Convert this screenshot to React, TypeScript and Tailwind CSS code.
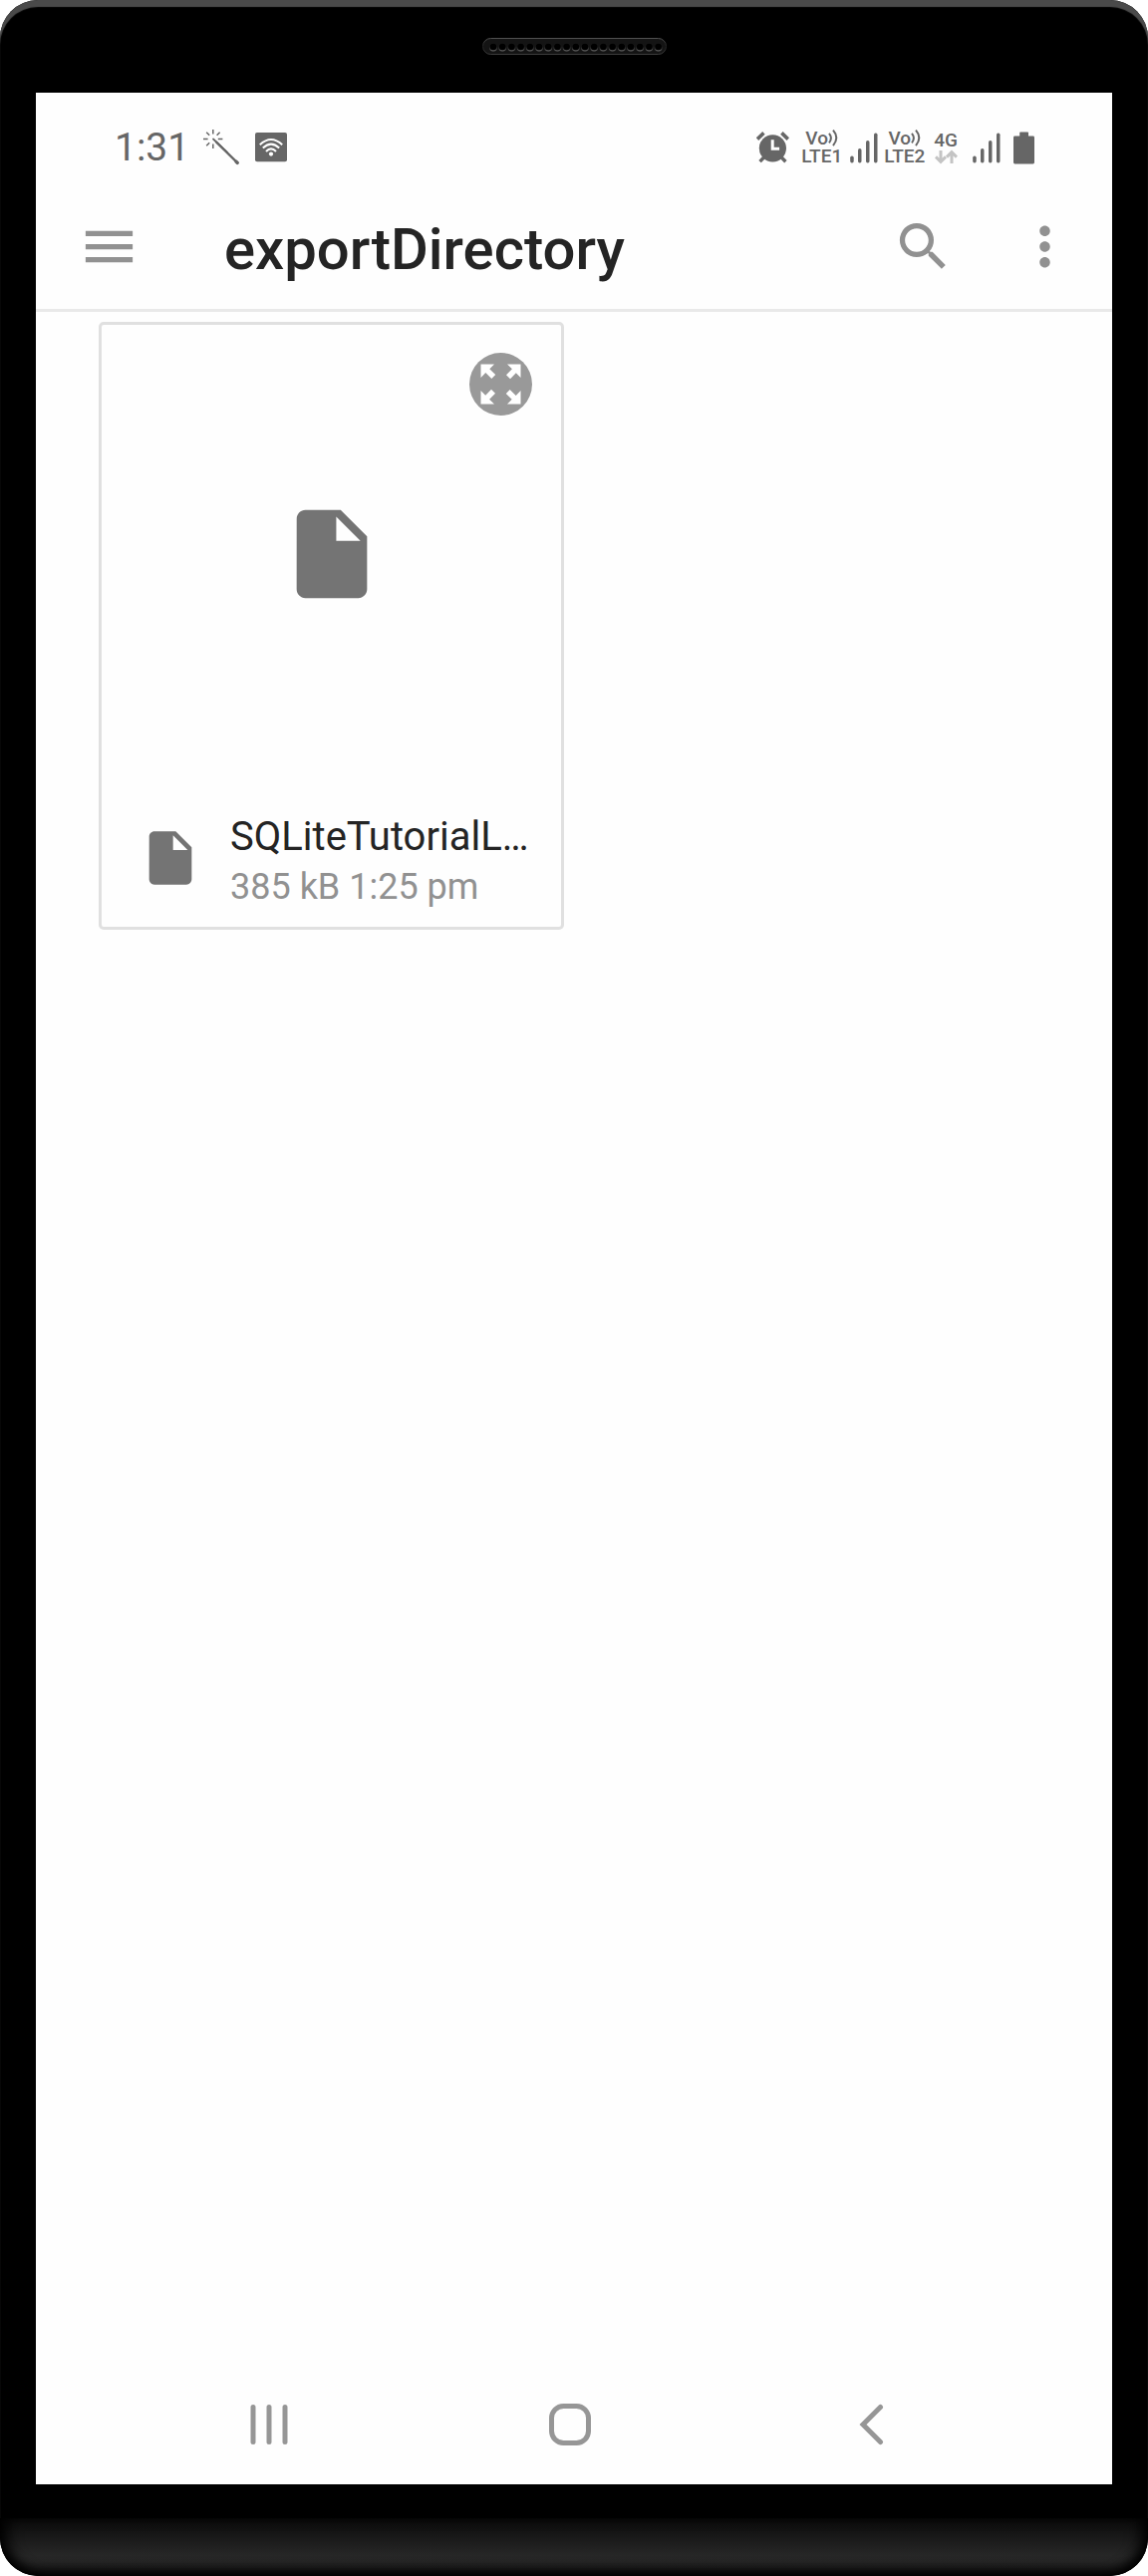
const LABEL = "font-medium whitespace-nowrap";

function Speaker() {
  const holes = Array.from({ length: 19 }, (_, i) => 11 + i * 9.2);
  return (
    <svg width="185" height="17" viewBox="0 0 185 17" aria-hidden="true">
      <defs>
        <linearGradient id="rim" x1="0" y1="0" x2="0" y2="1">
          <stop offset="0" stopColor="#505050" />
          <stop offset="0.5" stopColor="#222" />
          <stop offset="1" stopColor="#3c3c3c" />
        </linearGradient>
        <linearGradient id="hole" x1="0" y1="0" x2="0" y2="1">
          <stop offset="0.4" stopColor="#1a1a1a" />
          <stop offset="1" stopColor="#666" />
        </linearGradient>
      </defs>
      <rect x="0.5" y="0.5" width="184" height="16" rx="8" fill="#141414" stroke="url(#rim)" />
      {holes.map((x) => (
        <g key={x}>
          <circle cx={x} cy="9.5" r="4" fill="url(#hole)" />
          <circle cx={x} cy="9" r="3.3" fill="#000" />
        </g>
      ))}
    </svg>
  );
}

function WandIcon() {
  return (
    <svg width="36" height="36" viewBox="0 0 36 36" fill="none" stroke="currentColor" strokeLinecap="butt" aria-hidden="true">
      <path d="M9.8 0v4.4M9.8 14.6V19M0 9.5h4.6M14.8 9.5h4.6M3.2 2.8l3 3M16.6 2.8l-3 3M3.2 16.2l3-3" strokeWidth="1.5" />
      <path d="M10 9.5l14 13.3" strokeWidth="1.8" strokeLinecap="round" />
      <path d="M13 12.5L34 33.2" strokeWidth="2.4" strokeLinecap="round" />
      <path d="M33.2 32.4l1 1" strokeWidth="3.4" strokeLinecap="round" />
    </svg>
  );
}

function WifiBadge() {
  return (
    <svg width="32" height="30" viewBox="0 0 32 30" fill="none" aria-hidden="true">
      <rect width="32" height="29.3" rx="2" fill="currentColor" />
      <g stroke="#fff" strokeWidth="2.1">
        <path d="M4.8 12.2Q16 1.8 27.2 12.2" />
        <path d="M7.8 15.6Q16 7.6 24.2 15.6" />
        <path d="M11 18.9Q16 13.8 21 18.9" />
      </g>
      <circle cx="16" cy="21.6" r="2.1" fill="#fff" />
    </svg>
  );
}

function AlarmIcon() {
  return (
    <svg width="33" height="32" viewBox="0 0 33 32" fill="none" aria-hidden="true">
      <circle cx="16.4" cy="16.8" r="13.6" fill="currentColor" />
      <path d="M1 7.6L7.4 1.4M25.4 1.4l6.4 6.2" stroke="currentColor" strokeWidth="3.6" />
      <path d="M8 25.5l-4.4 4.7M24.8 25.5l4.6 4.7" stroke="currentColor" strokeWidth="3.4" />
      <path d="M16.2 8.3v8.9h6.9" stroke="#fff" strokeWidth="3" />
    </svg>
  );
}

function SignalIcon() {
  return (
    <svg width="28" height="31" viewBox="0 0 28 31" fill="currentColor" aria-hidden="true">
      <rect x="0.2" y="23.5" width="3.5" height="7" rx="1.7" />
      <rect x="8" y="16" width="3.5" height="14.5" rx="1.7" />
      <rect x="16" y="8" width="3.5" height="22.5" rx="1.7" />
      <rect x="24" y="0.5" width="3.5" height="30" rx="1.7" />
    </svg>
  );
}

function VoLte({ line }: { line: string }) {
  return (
    <span className="flex flex-col items-center text-[19px] leading-[18px]">
      <span className="flex items-start">
        <span className={LABEL}>Vo</span>
        <svg width="10" height="17" viewBox="0 0 10 17" fill="none" stroke="currentColor" strokeWidth="2" aria-hidden="true">
          <path d="M1 3.8q3.8 4.8 0 9.6M5 0.6q6.6 7.6 0 15.6" />
        </svg>
      </span>
      <span className={LABEL}>{line}</span>
    </span>
  );
}

function StatusBar() {
  return (
    <div className="flex h-[106px] items-center justify-between pt-1 pr-[78px] pl-[79px] text-[#666]">
      <div className="flex items-center">
        <span className="text-[39px] leading-none">1:31</span>
        <span className="ml-[14px]"><WandIcon /></span>
        <span className="ml-4"><WifiBadge /></span>
      </div>
      <div className="flex items-center">
        <AlarmIcon />
        <span className="ml-3"><VoLte line="LTE1" /></span>
        <span className="ml-2"><SignalIcon /></span>
        <span className="ml-[6px]"><VoLte line="LTE2" /></span>
        <span className="ml-[9px] flex flex-col items-center text-[19px] leading-[18px]">
          <span className={LABEL}>4G</span>
          <svg width="23" height="15" viewBox="0 0 23 15" fill="none" stroke="#c4c4c4" strokeWidth="3" aria-hidden="true">
            <path d="M6 1v11M1 7.4l5 5 5-5M17 14V3M12 7.6l5-5 5 5" />
          </svg>
        </span>
        <span className="ml-[15px]"><SignalIcon /></span>
        <svg className="ml-[13px]" width="21" height="33" viewBox="0 0 21 33" fill="currentColor" aria-hidden="true">
          <path d="M7 .4h7.2q.8 0 .8.8v3.4h4.6q1.4 0 1.4 1.4v25q0 1.4-1.4 1.4H1.4Q0 32.400 0 31V6q0-1.400 1.400-1.400h4.800V1.200Q6.200.4 7 .4z" />
        </svg>
      </div>
    </div>
  );
}

function Toolbar() {
  return (
    <header className="flex h-[114px] items-center border-b-3 border-[#e9e9e9] pr-9 pb-[14px] pl-[42px] text-[#919191]">
      <button type="button" aria-label="Open menu">
        <svg width="63" height="63" viewBox="0 0 24 24" fill="currentColor" aria-hidden="true">
          <path d="M3 18h18v-2H3v2zm0-5h18v-2H3v2zm0-7v2h18V6H3z" />
        </svg>
      </button>
      <h1 className="ml-[84px] flex-1 pt-1 text-[58px] leading-[66px] font-medium text-[#242424]">exportDirectory</h1>
      <button type="button" aria-label="Search">
        <svg width="63" height="63" viewBox="0 0 24 24" fill="currentColor" aria-hidden="true">
          <path d="M15.500 14h-.79l-.28-.27A6.471 6.471 0 0 0 16 9.500 6.500 6.500 0 1 0 9.500 16c1.610 0 3.090-.59 4.230-1.570l.27.28v.79l5 4.990L20.490 19l-4.990-5zm-6 0C7.010 14 5 11.990 5 9.500S7.010 5 9.500 5 14 7.010 14 9.500 11.990 14 9.500 14z" />
        </svg>
      </button>
      <button type="button" aria-label="More options" className="ml-[59px]">
        <svg width="63" height="63" viewBox="0 0 24 24" fill="currentColor" aria-hidden="true">
          <path d="M12 8c1.100 0 2-.9 2-2s-.9-2-2-2-2 .9-2 2 .9 2 2 2zm0 2c-1.100 0-2 .9-2 2s.9 2 2 2 2-.9 2-2-.9-2-2-2zm0 6c-1.100 0-2 .9-2 2s.9 2 2 2 2-.9 2-2-.9-2-2-2z" />
        </svg>
      </button>
    </header>
  );
}

function FileIcon({ size }: { size: number }) {
  return (
    <svg className="shrink-0" width={size} height={size} viewBox="0 0 24 24" fill="#747474" aria-hidden="true">
      <path d="M6 2c-1.100 0-1.990.9-1.990 2L4 20c0 1.100.89 2 1.990 2H18c1.100 0 2-.9 2-2V8l-6-6H6zm7 7V3.500L18.500 9H13z" />
    </svg>
  );
}

function FileCard({ name, details }: { name: string; details: string }) {
  return (
    <article className="relative rounded-[5px] border-3 border-[#e0e0e0]">
      <div className="flex h-[460px] items-center justify-center">
        <FileIcon size={106} />
      </div>
      <button type="button" aria-label={`Preview ${name}`} className="absolute top-7 right-[29px]">
        <svg width="63" height="63" viewBox="0 0 63 63" aria-hidden="true">
          <circle cx="31.500" cy="31.500" r="31.500" fill="#999" />
          <g fill="#fff">
            {[0, 90, 180, 270].map((turn) => (
              <path key={turn} transform={`rotate(${turn} 31.500 31.500)`} d="M11.500 11.500H25L20.300 16.200L26.200 22L22.300 26L16.300 20.100L11.500 25z" />
            ))}
          </g>
        </svg>
      </button>
      <div className="flex h-[144px] items-center pt-[6px] pl-[37px]">
        <FileIcon size={64} />
        <div className="ml-7 pt-2">
          <p className="text-[40px] leading-[50px] whitespace-nowrap text-[#242424]">{name}</p>
          <p className="text-[36px] leading-[50px] text-[#919191]">{details}</p>
        </div>
      </div>
    </article>
  );
}

function NavigationBar() {
  return (
    <nav className="flex h-[120px] items-center pr-[91px] pl-[83px] text-[#969696]">
      <button type="button" aria-label="Recent apps" className="flex flex-1 justify-center">
        <svg width="42" height="42" viewBox="0 0 42 42" stroke="currentColor" strokeWidth="5" strokeLinecap="round" aria-hidden="true">
          <path d="M5 3.500v35M21 3.500v35M37 3.500v35" />
        </svg>
      </button>
      <button type="button" aria-label="Home" className="flex flex-1 justify-center">
        <svg width="42" height="42" viewBox="0 0 42 42" fill="none" stroke="currentColor" strokeWidth="5" aria-hidden="true">
          <rect x="2.500" y="2.500" width="37" height="37" rx="12" />
        </svg>
      </button>
      <button type="button" aria-label="Back" className="flex flex-1 justify-center">
        <svg width="42" height="42" viewBox="0 0 42 42" fill="none" stroke="currentColor" strokeWidth="5" strokeLinecap="round" aria-hidden="true">
          <path d="M30.500 3.500L13 21L30.500 38.500" />
        </svg>
      </button>
    </nav>
  );
}

export default function App() {
  return (
    <div className="min-h-screen bg-white font-[Roboto,sans-serif]">
      <div className="flex min-h-screen flex-col overflow-hidden rounded-[38px] bg-black shadow-[inset_0_7px_1px_#4a4a4a]">
        <div className="flex h-[93px] items-center justify-center">
          <Speaker />
        </div>
        <div className="mx-9 flex flex-1 flex-col bg-[#fefefe]">
          <StatusBar />
          <Toolbar />
          <main className="grid flex-1 grid-cols-2 content-start gap-5 px-[63px] pt-[10px]">
            <FileCard name="SQLiteTutorialL…" details="385 kB 1:25 pm" />
          </main>
          <NavigationBar />
        </div>
        <div className="mt-[34px] h-[58px] rounded-b-[38px] bg-linear-to-b from-[#0b0b0b] via-[#272727] via-65% to-[#242424] shadow-[inset_0_-8px_12px_-2px_#000,inset_12px_0_16px_-6px_#000,inset_-12px_0_16px_-6px_#000]" />
      </div>
    </div>
  );
}
